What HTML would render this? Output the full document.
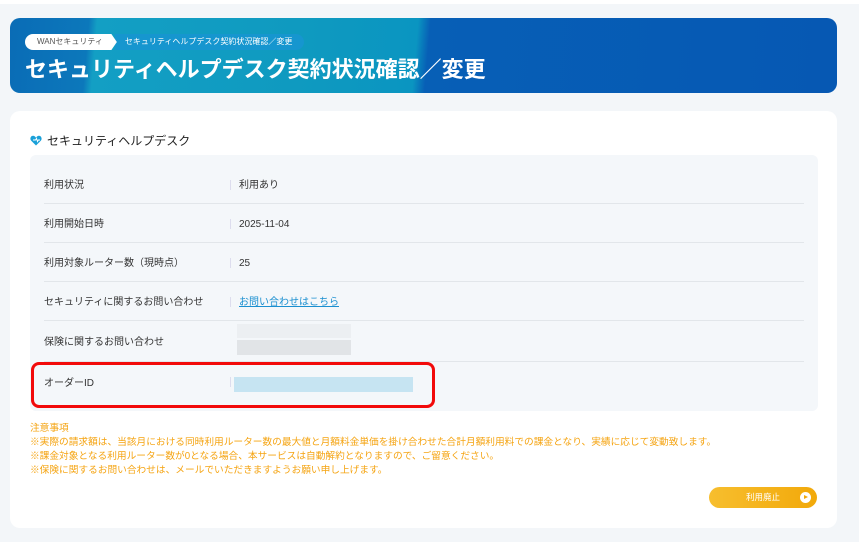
<!DOCTYPE html>
<html><head><meta charset="utf-8"><style>
*{margin:0;padding:0;box-sizing:border-box}
body{width:859px;height:542px;background:#f3f6f9;font-family:"Liberation Sans","Noto Sans CJK JP",sans-serif;position:relative;overflow:hidden}
.top{position:absolute;left:0;top:0;width:859px;height:4px;background:#fff}
.banner{position:absolute;left:10px;top:18px;width:827px;height:75px;border-radius:10px;overflow:hidden;background:linear-gradient(95deg,#0a6cb6 0,#0c78bb 9.5%,#139fc4 10.5%,#0f9ac0 35%,#0a95c1 49%,#075fb6 50.5%,#0658b3 100%)}
.crumb{position:absolute;left:15px;top:16px;height:16px;display:flex;align-items:center;font-size:8px}
.c1{background:#fff;color:#555;border-radius:8px 0 0 8px;padding:0 14px 0 12px;height:16px;line-height:16px;clip-path:polygon(0 0,94% 0,100% 50%,94% 100%,0 100%)}
.c2{background:#1696cf;color:#fff;height:16px;line-height:16px;padding:0 12px 0 10px;border-radius:0 8px 8px 0;margin-left:-2px}
.title{position:absolute;left:15px;top:34px;color:#fff;font-size:22px;font-weight:bold}
.card{position:absolute;left:10px;top:111px;width:827px;height:417px;background:#fff;border-radius:10px}
.h{position:absolute;left:20px;top:21px;font-size:12px;color:#222;display:flex;align-items:center;gap:5px}
.tbl{position:absolute;left:20px;top:44px;width:788px;height:256px;background:#f4f7fa;border-radius:6px}
.row{position:absolute;left:14px;width:760px;height:39px;border-bottom:1px solid #e2e6ea;font-size:10px;color:#333}
.row .l{position:absolute;left:0;top:1px;line-height:39px}
.row .v{position:absolute;left:195px;top:1px;line-height:39px}
.row .s{position:absolute;left:186px;top:15px;width:1px;height:10px;background:#dde}
.notes{position:absolute;left:20px;top:311px;font-size:9.7px;color:#f5a412;line-height:14px;white-space:nowrap}
.btn{position:absolute;left:699px;top:376px;width:108px;height:21px;border-radius:11px;background:linear-gradient(90deg,#f7be2e,#f2a90a);color:#fff;font-size:8.5px;line-height:21px;text-align:center}
.btn i{position:absolute;right:6px;top:5px;width:11px;height:11px;border-radius:50%;background:#fff}
.btn i:after{content:"";position:absolute;left:4px;top:3px;border-left:4px solid #f2a90a;border-top:2.5px solid transparent;border-bottom:2.5px solid transparent}
.red{position:absolute;left:31px;top:362px;width:404px;height:46px;border:3px solid #f20a0a;border-radius:8px}
</style></head><body>
<div class="top"></div>
<div class="banner">
<div class="crumb"><span class="c1">WANセキュリティ</span><span class="c2">セキュリティヘルプデスク契約状況確認／変更</span></div>
<div class="title">セキュリティヘルプデスク契約状況確認／変更</div>
</div>
<div class="card">
<div class="h"><svg width="12" height="11" viewBox="0 0 12 11"><path d="M6 10.5L1 5.5C-0.5 3.5 1 0.5 3.3 0.8 4.6 1 5.5 2 6 2.8 6.5 2 7.4 1 8.7 0.8 11 0.5 12.5 3.5 11 5.5Z" fill="#1aa0d8"/><path d="M3 5h2.5l1-1.5 1 3 .8-1.5H10" stroke="#fff" stroke-width="1" fill="none"/></svg>セキュリティヘルプデスク</div>
<div class="tbl">
<div class="row" style="top:10px"><span class="l">利用状況</span><span class="s"></span><span class="v">利用あり</span></div>
<div class="row" style="top:49px"><span class="l">利用開始日時</span><span class="s"></span><span class="v">2025-11-04</span></div>
<div class="row" style="top:88px"><span class="l">利用対象ルーター数（現時点）</span><span class="s"></span><span class="v">25</span></div>
<div class="row" style="top:127px"><span class="l">セキュリティに関するお問い合わせ</span><span class="s"></span><span class="v" style="color:#1a8fd0;text-decoration:underline">お問い合わせはこちら</span></div>
<div class="row" style="top:167px;height:40px"><span class="l" style="line-height:40px">保険に関するお問い合わせ</span>
<div style="position:absolute;left:193px;top:2px;width:114px;height:14px;background:#eceff2"></div>
<div style="position:absolute;left:193px;top:18px;width:114px;height:15px;background:#e1e4e7"></div></div>
<div class="row" style="top:208px;border:none"><span class="l">オーダーID</span><span class="s" style="top:14px"></span>
<div style="position:absolute;left:190px;top:14px;width:179px;height:15px;background:#c6e4f2"></div></div>
</div>
<div class="notes">注意事項<br>※実際の請求額は、当該月における同時利用ルーター数の最大値と月額料金単価を掛け合わせた合計月額利用料での課金となり、実績に応じて変動致します。<br>※課金対象となる利用ルーター数が0となる場合、本サービスは自動解約となりますので、ご留意ください。<br>※保険に関するお問い合わせは、メールでいただきますようお願い申し上げます。</div>
<div class="btn">利用廃止<i></i></div>
</div>
<div class="red"></div>
</body></html>
